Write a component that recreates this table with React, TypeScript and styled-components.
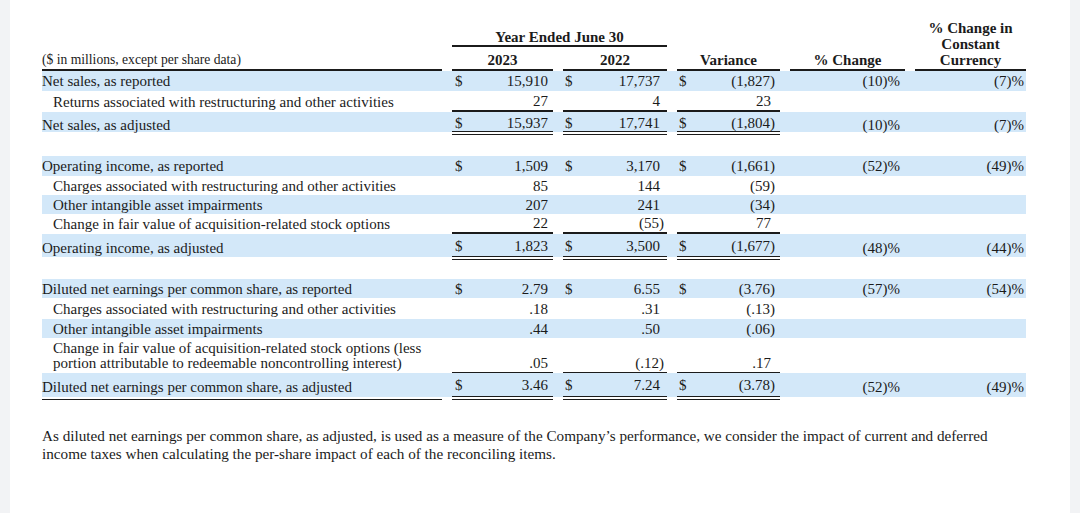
import React from 'react'
import styled, { createGlobalStyle } from 'styled-components'

const GlobalStyle = createGlobalStyle`
  html, body {
    margin: 0;
    padding: 0;
    background: #f2f3f5;
  }
  body {
    font-family: "Liberation Serif", "Times New Roman", serif;
    color: #1b1b1b;
  }
`

type Rule = 'none' | 'thin' | 'thick' | 'double'

const ruleCss = (r?: Rule) =>
  r === 'thin'
    ? '1px solid #1b1b1b'
    : r === 'thick'
    ? '2px solid #1b1b1b'
    : r === 'double'
    ? '4px double #1b1b1b'
    : '0 none'

const COLS = '400px 101px 104px 103px 115px 111px'
const BAND = '#d3e8f9'

// right padding of the digits in each money column; parens hang past it
const DIGIT_PAD = [5, 7, 9]
const SIGN_PAD = [3, 2, 2]

type Line = {
  label: string[]
  indent?: boolean
  band?: boolean
  dollar?: boolean
  values: [string, string, string]
  pct?: [string, string]
  rule?: Rule
  labelRule?: Rule
  h: number
  top?: number
}

const netSales: Line[] = [
  { label: ['Net sales, as reported'], band: true, dollar: true, values: ['15,910', '17,737', '(1,827)'], pct: ['(10)%', '(7)%'], h: 20 },
  { label: ['Returns associated with restructuring and other activities'], indent: true, values: ['27', '4', '23'], rule: 'thick', h: 21 },
  { label: ['Net sales, as adjusted'], band: true, dollar: true, values: ['15,937', '17,741', '(1,804)'], pct: ['(10)%', '(7)%'], rule: 'double', h: 23, top: 2 },
]

const operating: Line[] = [
  { label: ['Operating income, as reported'], band: true, dollar: true, values: ['1,509', '3,170', '(1,661)'], pct: ['(52)%', '(49)%'], h: 20 },
  { label: ['Charges associated with restructuring and other activities'], indent: true, values: ['85', '144', '(59)'], h: 19 },
  { label: ['Other intangible asset impairments'], indent: true, band: true, values: ['207', '241', '(34)'], h: 19 },
  { label: ['Change in fair value of acquisition-related stock options'], indent: true, values: ['22', '(55)', '77'], rule: 'thick', h: 20 },
  { label: ['Operating income, as adjusted'], band: true, dollar: true, values: ['1,823', '3,500', '(1,677)'], pct: ['(48)%', '(44)%'], rule: 'double', h: 26, top: 2 },
]

const eps: Line[] = [
  { label: ['Diluted net earnings per common share, as reported'], band: true, dollar: true, values: ['2.79', '6.55', '(3.76)'], pct: ['(57)%', '(54)%'], h: 19 },
  { label: ['Charges associated with restructuring and other activities'], indent: true, values: ['.18', '.31', '(.13)'], h: 21 },
  { label: ['Other intangible asset impairments'], indent: true, band: true, values: ['.44', '.50', '(.06)'], h: 19 },
  {
    label: [
      'Change in fair value of acquisition-related stock options (less',
      'portion attributable to redeemable noncontrolling interest)',
    ],
    indent: true,
    values: ['.05', '(.12)', '.17'],
    rule: 'thin',
    h: 35,
  },
  { label: ['Diluted net earnings per common share, as adjusted'], band: true, dollar: true, values: ['3.46', '7.24', '(3.78)'], pct: ['(52)%', '(49)%'], rule: 'double', labelRule: 'thin', h: 27, top: 1 },
]

const Money = ({ col, value, dollar }: { col: number; value: string; dollar?: boolean }) => {
  const paren = value.endsWith(')')
  return (
    <>
      <Sign $pad={SIGN_PAD[col]}>{dollar ? '$' : ''}</Sign>
      <Amount $pad={DIGIT_PAD[col]}>
        {paren ? value.slice(0, -1) : value}
        {paren && <Hang>)</Hang>}
      </Amount>
    </>
  )
}

const Section = ({ lines }: { lines: Line[] }) => (
  <>
    {lines.map((l, i) => {
      const multi = l.label.length > 1
      return (
        <Row key={i} $band={l.band} $h={l.h} $cut={l.rule === 'double' ? 3 : 0}>
          <Label $indent={l.indent} $rule={l.labelRule} $top={l.top ?? 0} $multi={multi}>
            {l.label.map((t, j) => (
              <span key={j}>{t}</span>
            ))}
          </Label>
          {l.values.map((v, c) => (
            <MoneyCell key={c} $rule={l.rule} $top={l.top ?? 0} $multi={multi}>
              <Money col={c} value={v} dollar={l.dollar} />
            </MoneyCell>
          ))}
          <PctCell $pad={5} $top={l.top ?? 0}>{l.pct ? l.pct[0] : ''}</PctCell>
          <PctCell $pad={2} $top={l.top ?? 0}>{l.pct ? l.pct[1] : ''}</PctCell>
        </Row>
      )
    })}
  </>
)

const App = () => {
  return (
    <Page>
      <GlobalStyle />
      <Sheet>
        <Table>
          <Head>
            <YearSpan>Year Ended June 30</YearSpan>
            <Caption>($ in millions, except per share data)</Caption>
            <HeadCell>2023</HeadCell>
            <HeadCell>2022</HeadCell>
            <HeadCell>Variance</HeadCell>
            <HeadCell>% Change</HeadCell>
            <Constant>
              % Change in
              <br />
              Constant
              <br />
              Currency
            </Constant>
          </Head>
          <Section lines={netSales} />
          <Spacer $h={21} />
          <Section lines={operating} />
          <Spacer $h={19} />
          <Section lines={eps} />
        </Table>
        <Note>
          As diluted net earnings per common share, as adjusted, is used as a measure of the Company’s performance, we
          consider the impact of current and deferred
          <br />
          income taxes when calculating the per-share impact of each of the reconciling items.
        </Note>
      </Sheet>
    </Page>
  )
}

export default App

const Page = styled.div`
  width: 1080px;
  height: 513px;
  display: flex;
  justify-content: center;
  overflow: hidden;
`
const Sheet = styled.div`
  width: 1060px;
  height: 100%;
  background: #ffffff;
  padding: 20px 0 0 32px;
  box-sizing: border-box;
`
const Table = styled.div`
  width: 984px;
  display: flex;
  flex-direction: column;
`
const Head = styled.div`
  display: grid;
  grid-template-columns: ${COLS};
  grid-template-rows: 27px 24px;
  column-gap: 10px;
  font-weight: bold;
  font-size: 15px;
  line-height: 16px;
`
const YearSpan = styled.div`
  grid-column: 2 / 4;
  grid-row: 1;
  align-self: end;
  text-align: center;
  border-bottom: 2px solid #1b1b1b;
`
const HeadCell = styled.div`
  grid-row: 2;
  display: flex;
  align-items: flex-end;
  justify-content: center;
  padding-bottom: 1px;
  border-bottom: 2px solid #1b1b1b;
`
const Caption = styled(HeadCell)`
  grid-column: 1;
  justify-content: flex-start;
  font-weight: normal;
  font-size: 13.6px;
`
const Constant = styled.div`
  grid-column: 6;
  grid-row: 1 / 3;
  align-self: end;
  text-align: center;
  padding-bottom: 1px;
  border-bottom: 2px solid #1b1b1b;
`
const Row = styled.div<{ $band?: boolean; $h: number; $cut: number }>`
  display: grid;
  grid-template-columns: ${COLS};
  column-gap: 10px;
  height: ${(p) => p.$h}px;
  font-size: 15px;
  background: ${(p) =>
    p.$band ? `linear-gradient(to bottom, ${BAND} calc(100% - ${p.$cut}px), transparent 0)` : 'transparent'};
`
const Label = styled.div<{ $indent?: boolean; $rule?: Rule; $top: number; $multi: boolean }>`
  display: flex;
  flex-direction: column;
  justify-content: center;
  padding-left: ${(p) => (p.$indent ? 11 : 0)}px;
  padding-top: ${(p) => p.$top}px;
  line-height: ${(p) => (p.$multi ? 15 : 16)}px;
  border-bottom: ${(p) => ruleCss(p.$rule)};
  white-space: nowrap;
`
const MoneyCell = styled.div<{ $rule?: Rule; $top: number; $multi: boolean }>`
  display: flex;
  justify-content: space-between;
  align-items: ${(p) => (p.$multi ? 'flex-end' : 'center')};
  padding-top: ${(p) => p.$top}px;
  padding-bottom: ${(p) => (p.$multi ? 1 : 0)}px;
  line-height: 16px;
  border-bottom: ${(p) => ruleCss(p.$rule)};
`
const Sign = styled.span<{ $pad: number }>`
  padding-left: ${(p) => p.$pad}px;
`
const Amount = styled.span<{ $pad: number }>`
  padding-right: ${(p) => p.$pad}px;
`
const Hang = styled.span`
  margin-right: -4px;
`
const PctCell = styled.div<{ $pad: number; $top: number }>`
  display: flex;
  align-items: center;
  justify-content: flex-end;
  padding-right: ${(p) => p.$pad}px;
  padding-top: ${(p) => p.$top}px;
  line-height: 16px;
`
const Spacer = styled.div<{ $h: number }>`
  height: ${(p) => p.$h}px;
`
const Note = styled.p`
  margin: 27px 0 0;
  font-size: 15.2px;
  line-height: 18px;
  white-space: nowrap;
`
